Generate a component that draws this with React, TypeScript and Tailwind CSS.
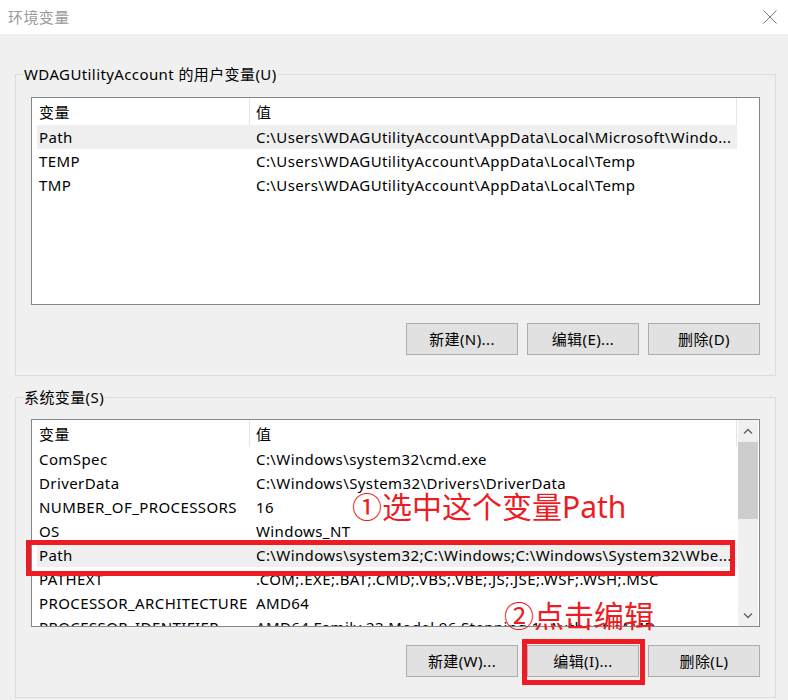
import type { ReactNode } from "react";

type Row = { name: string; value: string; selected?: boolean };

const userVars: Row[] = [
  { name: "Path", value: "C:\\Users\\WDAGUtilityAccount\\AppData\\Local\\Microsoft\\Windo...", selected: true },
  { name: "TEMP", value: "C:\\Users\\WDAGUtilityAccount\\AppData\\Local\\Temp" },
  { name: "TMP", value: "C:\\Users\\WDAGUtilityAccount\\AppData\\Local\\Temp" },
];

const systemVars: Row[] = [
  { name: "ComSpec", value: "C:\\Windows\\system32\\cmd.exe" },
  { name: "DriverData", value: "C:\\Windows\\System32\\Drivers\\DriverData" },
  { name: "NUMBER_OF_PROCESSORS", value: "16" },
  { name: "OS", value: "Windows_NT" },
  { name: "Path", value: "C:\\Windows\\system32;C:\\Windows;C:\\Windows\\System32\\Wbe...", selected: true },
  { name: "PATHEXT", value: ".COM;.EXE;.BAT;.CMD;.VBS;.VBE;.JS;.JSE;.WSF;.WSH;.MSC" },
  { name: "PROCESSOR_ARCHITECTURE", value: "AMD64" },
  { name: "PROCESSOR_IDENTIFIER", value: "AMD64 Family 23 Model 96 Stepping 1, AuthenticAMD" },
];

const GroupBox = ({ label, className, children }: { label: string; className?: string; children: ReactNode }) => (
  <fieldset className={`border border-[#dcdcdc] ${className ?? ""}`}>
    <legend className="ml-[7px] px-px leading-[20px]">{label}</legend>
    <div className="px-[15px] pb-[20px]">{children}</div>
  </fieldset>
);

const Chevron = ({ up }: { up?: boolean }) => (
  <svg width="10" height="6" viewBox="0 0 10 6" fill="none">
    <path
      d={up ? "M1 5.5 L5 1.5 L9 5.5" : "M1 0.5 L5 4.5 L9 0.5"}
      stroke="#606060"
      strokeWidth="1.3"
    />
  </svg>
);

const ListView = ({ rows, scroll }: { rows: Row[]; scroll?: boolean }) => (
  <div className="h-[208px] border border-[#828790] bg-white flex overflow-hidden">
    <div className="w-[706px] flex flex-col overflow-hidden">
      <div className="h-[27px] flex shrink-0">
        <div className="w-[218px] pl-[7px] pt-[2px] border-r border-[#e5e5e5] flex items-center">变量</div>
        <div className="w-[487px] pl-[6px] pt-[2px] border-r border-[#e5e5e5] flex items-center">值</div>
      </div>
      {rows.map((r) => (
        <div
          key={r.name}
          className={`ml-[5px] w-[700px] h-[24px] shrink-0 flex items-center whitespace-nowrap ${
            r.selected ? "bg-[#efefef]" : ""
          }`}
        >
          <div className="w-[213px] pl-[2px]">{r.name}</div>
          <div className="w-[487px] pl-[6px] overflow-hidden">{r.value}</div>
        </div>
      ))}
    </div>
    {scroll && (
      <div className="w-[20px] bg-[#f0f0f0] flex flex-col">
        <div className="h-[22px] flex items-center justify-center">
          <Chevron up />
        </div>
        <div className="h-[77px] bg-[#cdcdcd]" />
        <div className="flex-1" />
        <div className="h-[20px] flex items-center justify-center">
          <Chevron />
        </div>
      </div>
    )}
  </div>
);

const Buttons = ({ labels }: { labels: string[] }) => (
  <div className="mt-[18px] flex justify-end gap-[9px]">
    {labels.map((l) => (
      <button
        key={l}
        className="w-[112px] h-[32px] bg-[#e1e1e1] border border-[#adadad] text-[15px] text-black"
      >
        {l}
      </button>
    ))}
  </div>
);

export default function App() {
  return (
    <div className="relative w-[788px] h-[700px] bg-[#f0f0f0] overflow-hidden text-[15px] tracking-[0.4px] text-black font-['Noto_Sans','Noto_Sans_CJK_SC',sans-serif]">
      <div className="h-[34px] bg-white flex items-center justify-between pl-[8px] pr-[11px]">
        <span className="text-[#9b9b9b]">环境变量</span>
        <svg width="14" height="14" viewBox="0 0 14 14">
          <path d="M0.5 0.5 L13.5 13.5 M13.5 0.5 L0.5 13.5" stroke="#7a7a7a" strokeWidth="1" />
        </svg>
      </div>

      <div className="pl-[15px] pr-[12px] pt-[30px]">
        <GroupBox label="WDAGUtilityAccount 的用户变量(U)">
          <div className="pt-[13px]">
            <ListView rows={userVars} />
          </div>
          <Buttons labels={["新建(N)...", "编辑(E)...", "删除(D)"]} />
        </GroupBox>

        <GroupBox label="系统变量(S)" className="mt-[11px]">
          <div className="pt-[12px]">
            <ListView rows={systemVars} scroll />
          </div>
          <Buttons labels={["新建(W)...", "编辑(I)...", "删除(L)"]} />
        </GroupBox>
      </div>

      {/* annotations */}
      <div className="absolute left-[26px] top-[540px] w-[709px] h-[36px] border-[5px] border-[#ed1c24]" />
      <div className="absolute left-[522px] top-[639px] w-[123px] h-[46px] border-[5px] border-[#ed1c24]" />
      <div className="absolute left-[352px] top-[492px] text-[30px] leading-[30px] tracking-normal text-[#ed1c24] whitespace-nowrap">
        ①选中这个变量Path
      </div>
      <div className="absolute left-[504px] top-[601px] text-[30px] leading-[30px] tracking-normal text-[#ed1c24] whitespace-nowrap">
        ②点击编辑
      </div>
    </div>
  );
}
